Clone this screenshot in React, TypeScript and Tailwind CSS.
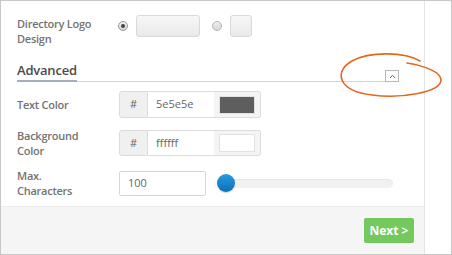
import { ChevronUp } from "lucide-react";

const label =
  "w-[102px] shrink-0 text-[11px] leading-[15px] font-semibold tracking-[-0.25px] text-[#737373]";

function Swatch({ color }: { color: string }) {
  return (
    <div className="flex h-full w-[47px] items-center justify-start rounded-r-[3px] border border-l-0 border-[#dcdcdc] bg-[#f4f4f4] pl-[5px]">
      <div className="h-[18px] w-[36px] border border-[#e2e2e2]" style={{ background: color }} />
    </div>
  );
}

function ColorGroup({ value, color, h }: { value: string; color: string; h: string }) {
  return (
    <div className={`flex ${h}`}>
      <div className="flex w-[29px] items-center justify-center rounded-l-[3px] border border-[#dcdcdc] bg-[#f0f0f0] text-[11px] text-[#666]">
        #
      </div>
      <div className="flex w-[66px] items-center border-y border-[#dcdcdc] bg-white pl-[8px] text-[11px] text-[#666]">
        {value}
      </div>
      <Swatch color={color} />
    </div>
  );
}

export default function App() {
  return (
    <div
      className="relative flex h-[255px] w-[452px] border border-[#c8c8c8] bg-white"
      style={{ fontFamily: '"Open Sans", "Liberation Sans", sans-serif' }}
    >
      <div className="flex w-[424px] flex-col border-r border-[#e3e3e3]">
        {/* form body */}
        <div className="flex-1 pl-[16px] pr-[25px] pt-[14px]">
          <div className="flex items-start">
            <div className={`${label} pt-[1px]`}>
              Directory Logo
              <br />
              Design
            </div>
            <div className="flex h-[22px] items-center">
              <span className="ml-[-1px] flex h-[10px] w-[10px] items-center justify-center rounded-full border border-[#9a9a9a] bg-gradient-to-b from-[#f2f2f2] to-[#d6d6d6]">
                <span className="h-[4px] w-[4px] rounded-full bg-[#444]" />
              </span>
              <span className="ml-[8px] h-[22px] w-[64px] rounded-[3px] border border-[#d9d9d9] bg-gradient-to-b from-[#f7f7f7] to-[#e9e9e9]" />
              <span className="ml-[12px] h-[10px] w-[10px] rounded-full border border-[#b4b4b4] bg-gradient-to-b from-[#eeeeee] to-[#d8d8d8]" />
              <span className="ml-[8px] h-[22px] w-[22px] rounded-[3px] border border-[#d9d9d9] bg-gradient-to-b from-[#f7f7f7] to-[#e9e9e9]" />
            </div>
          </div>

          {/* Advanced heading */}
          <div className="mt-[14px] flex items-end justify-between border-b border-[#cfd4da]">
            <span className="-mb-[1px] border-b-2 border-[#a6aebb] text-[13px] font-semibold leading-[20px] tracking-[-0.2px] text-[#4a4a4a]">
              Advanced
            </span>
            <span className="-mb-[1px] flex h-[12px] w-[14px] items-center justify-center border border-[#b8b8b8] bg-white">
              <ChevronUp size={9} strokeWidth={2.5} className="text-[#555]" />
            </span>
          </div>

          <div className="mt-[9px] flex items-center">
            <div className={label}>Text Color</div>
            <ColorGroup value="5e5e5e" color="#5e5e5e" h="h-[27px]" />
          </div>

          <div className="mt-[10px] flex items-center">
            <div className={label}>
              Background
              <br />
              Color
            </div>
            <ColorGroup value="ffffff" color="#ffffff" h="h-[26px]" />
          </div>

          <div className="mt-[10px] flex items-center">
            <div className={label}>
              Max.
              <br />
              Characters
            </div>
            <div className="flex h-[25px] w-[87px] items-center rounded-[2px] border border-[#d6d6d6] pl-[8px] text-[11px] text-[#666]">
              100
            </div>
            <div className="relative ml-[11px] mr-[6px] flex h-[18px] flex-1 items-center">
              <div className="h-[9px] w-full rounded-full bg-[#f1f1f1] shadow-[inset_0_1px_1px_rgba(0,0,0,0.04)]" />
              <div className="absolute left-0 top-0 h-[18px] w-[18px] rounded-full bg-gradient-to-b from-[#2a9be0] to-[#0b6fb6] shadow-[0_1px_1px_rgba(0,0,0,0.2)]" />
            </div>
          </div>
        </div>

        {/* footer */}
        <div className="flex h-[48px] items-center justify-end border-t border-[#ececec] bg-[#f5f5f5] pr-[10px]">
          <button className="h-[25px] w-[50px] rounded-[2px] bg-[#74c95e] text-[12px] font-bold text-white">
            Next &gt;
          </button>
        </div>
      </div>
      <div className="flex-1" />

      {/* hand-drawn highlight */}
      <svg className="pointer-events-none absolute left-[-1px] top-[-1px]" width="452" height="255" viewBox="0 0 452 255">
        <path
          d="M420 61 C 405 52, 370 51, 352 61 C 334 71, 337 91, 372 95 C 402 99, 441 92, 441 80 C 441 72, 425 66, 407 63"
          fill="none"
          stroke="#e5661c"
          strokeWidth="1.6"
          strokeLinecap="round"
        />
      </svg>
    </div>
  );
}
